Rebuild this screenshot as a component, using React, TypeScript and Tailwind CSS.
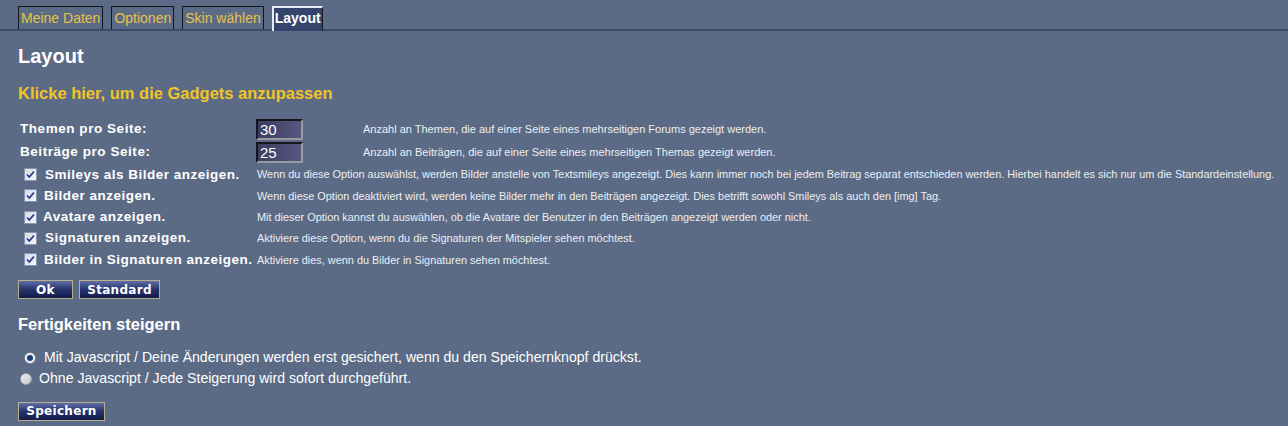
const font = { fontFamily: '"Liberation Sans", Arial, sans-serif' };

const tabs = [
  { label: 'Meine Daten', active: false },
  { label: 'Optionen', active: false },
  { label: 'Skin wählen', active: false },
  { label: 'Layout', active: true },
];

const checks = [
  {
    label: 'Smileys als Bilder anzeigen.',
    pad: 'pl-[6px]',
    gap: 'gap-[8px]',
    text: 'Wenn du diese Option auswählst, werden Bilder anstelle von Textsmileys angezeigt. Dies kann immer noch bei jedem Beitrag separat entschieden werden. Hierbei handelt es sich nur um die Standardeinstellung.',
  },
  {
    label: 'Bilder anzeigen.',
    pad: 'pl-[6px]',
    gap: 'gap-[7px]',
    text: 'Wenn diese Option deaktiviert wird, werden keine Bilder mehr in den Beiträgen angezeigt. Dies betrifft sowohl Smileys als auch den [img] Tag.',
  },
  {
    label: 'Avatare anzeigen.',
    pad: 'pl-[6px]',
    gap: 'gap-[6px]',
    text: 'Mit dieser Option kannst du auswählen, ob die Avatare der Benutzer in den Beiträgen angezeigt werden oder nicht.',
  },
  {
    label: 'Signaturen anzeigen.',
    pad: 'pl-[6px]',
    gap: 'gap-[8px]',
    text: 'Aktiviere diese Option, wenn du die Signaturen der Mitspieler sehen möchtest.',
  },
  {
    label: 'Bilder in Signaturen anzeigen.',
    pad: 'pl-[6px]',
    gap: 'gap-[7px]',
    text: 'Aktiviere dies, wenn du Bilder in Signaturen sehen möchtest.',
  },
];

const CheckBox = () => (
  <span className="inline-flex h-[13px] w-[13px] shrink-0 items-center justify-center border border-[#8a94a8] bg-gradient-to-br from-[#d4dae8] to-[#f6f8fc]">
    <svg width="9" height="9" viewBox="0 0 9 9">
      <path d="M1 4.5 L3.3 7 L8 1.5" stroke="#2a3c86" strokeWidth="1.8" fill="none" />
    </svg>
  </span>
);

const Radio = ({ checked }: { checked: boolean }) => (
  <span
    className={
      checked
        ? 'inline-flex h-[12px] w-[12px] shrink-0 items-center justify-center rounded-full border border-[#7a8494] bg-[#f4f4f6]'
        : 'inline-flex h-[12px] w-[12px] shrink-0 rounded-full border border-[#a0a4ac] bg-gradient-to-br from-[#f2f2f2] to-[#c4c6ca]'
    }
  >
    {checked && <span className="h-[6px] w-[6px] rounded-full bg-[#1e3c7a]" />}
  </span>
);

const Btn = ({ children, w }: { children: string; w: string }) => (
  <button
    className={`${w} h-[19px] border border-[#b8ad8c] bg-gradient-to-b from-[#6070a8] via-[#26326c] to-[#141c4c] font-bold leading-none text-white tracking-[0.3px]`}
    style={{ fontFamily: '"DejaVu Sans", Verdana, sans-serif', fontSize: '12px' }}
  >
    {children}
  </button>
);

const NumInput = ({ value }: { value: string }) => (
  <div className="flex h-[21px] w-[47px] items-center border-2 border-t-[#15161e] border-l-[#15161e] border-b-[#9a9aa4] border-r-[#9a9aa4] bg-gradient-to-r from-[#3c3b62] to-[#58577e] pl-[2px] text-[15px] leading-none text-white">
    {value}
  </div>
);

export default function App() {
  return (
    <div className="min-h-[426px] w-full bg-[#5b6b85] pt-[6px] text-white" style={font}>
      <div className="flex gap-[8px] border-b-2 border-[#3b4a69] pl-[18px]">
        {tabs.map((t) =>
          t.active ? (
            <div
              key={t.label}
              className="-mb-[2px] flex h-[25px] items-center border-l-2 border-t-2 border-r border-l-[#e8ecf4] border-t-[#e8ecf4] border-r-[#141820] bg-[#34446c] px-[1px] pb-[2px] text-[14px] font-bold text-white"
            >
              {t.label}
            </div>
          ) : (
            <div
              key={t.label}
              className="flex h-[23px] items-center border border-b-0 border-[#14161c] px-[2px] text-[14px] text-[#e6c24a]"
            >
              {t.label}
            </div>
          ),
        )}
      </div>

      <div className="px-[18px]">
        <h1 className="mt-[13px] text-[20px] font-bold leading-[24px] text-white">Layout</h1>
        <div className="mt-[15px] text-[16.5px] font-bold leading-[20px] text-[#f2c426]">
          Klicke hier, um die Gadgets anzupassen
        </div>

        <div className="mt-[15px] grid grid-cols-[238px_107px_1fr]">
          <div className="flex h-[23px] items-center pl-[2px] text-[13.5px] font-bold tracking-[0.55px]">Themen pro Seite:</div>
          <div className="flex h-[23px] items-center">
            <NumInput value="30" />
          </div>
          <div className="flex h-[23px] items-center text-[11px] text-[#eceef2]">
            Anzahl an Themen, die auf einer Seite eines mehrseitigen Forums gezeigt werden.
          </div>

          <div className="flex h-[23px] items-center pl-[2px] text-[13.5px] font-bold tracking-[0.55px]">Beiträge pro Seite:</div>
          <div className="flex h-[23px] items-center">
            <NumInput value="25" />
          </div>
          <div className="flex h-[23px] items-center text-[11px] text-[#eceef2]">
            Anzahl an Beiträgen, die auf einer Seite eines mehrseitigen Themas gezeigt werden.
          </div>

          {checks.map((c) => (
            <div key={c.label} className="contents">
              <div className={`flex h-[21.3px] items-center whitespace-nowrap ${c.pad} ${c.gap} text-[13.5px] font-bold tracking-[0.5px]`}>
                <CheckBox />
                <span>{c.label}</span>
              </div>
              <div className="col-span-2 flex h-[21.3px] items-center whitespace-nowrap pl-[1px] text-[10.9px] text-[#eceef2]">
                {c.text}
              </div>
            </div>
          ))}
        </div>

        <div className="mt-[10px] flex gap-[6px]">
          <Btn w="w-[55px]">Ok</Btn>
          <Btn w="w-[81px]">Standard</Btn>
        </div>

        <h2 className="mt-[14px] text-[16.5px] font-bold leading-[22px] text-white">Fertigkeiten steigern</h2>

        <div className="mt-[12px] text-[14.1px]">
          <div className="flex h-[21px] items-center gap-[8px] pl-[6px]">
            <Radio checked />
            <span>Mit Javascript / Deine Änderungen werden erst gesichert, wenn du den Speichernknopf drückst.</span>
          </div>
          <div className="flex h-[21px] items-center gap-[7px] pl-[2px]">
            <Radio checked={false} />
            <span>Ohne Javascript / Jede Steigerung wird sofort durchgeführt.</span>
          </div>
        </div>

        <div className="mt-[9px]">
          <Btn w="w-[87px]">Speichern</Btn>
        </div>
      </div>
    </div>
  );
}
